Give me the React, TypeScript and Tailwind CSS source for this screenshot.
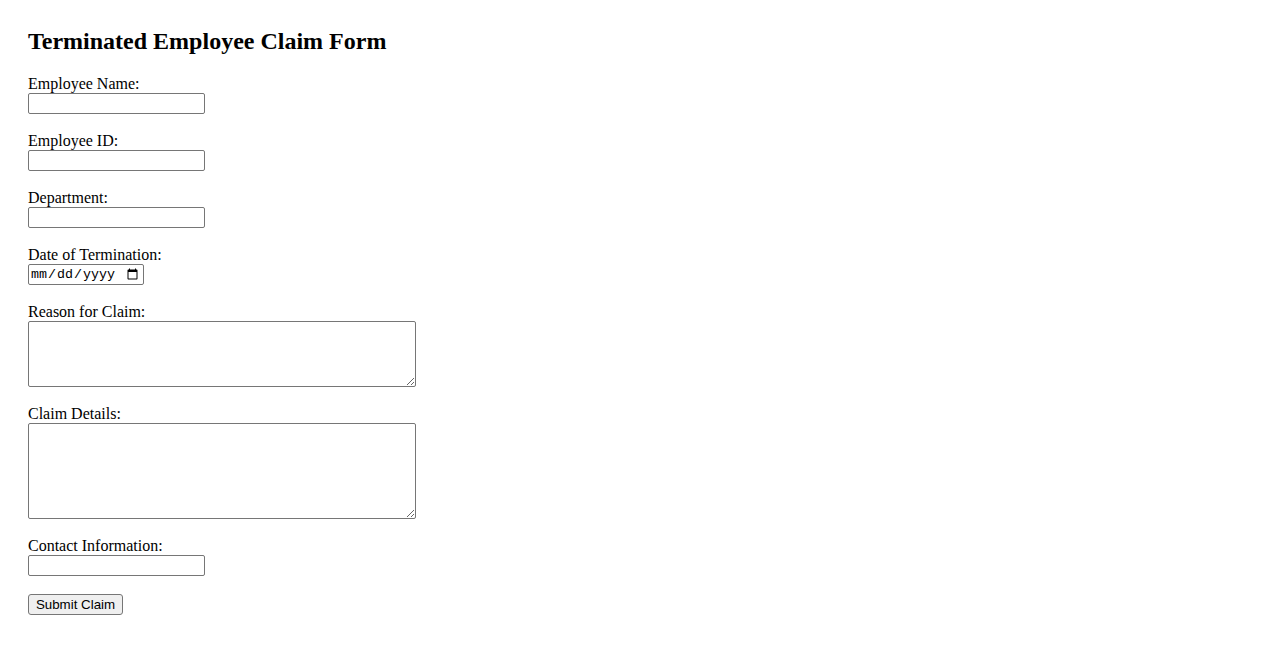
import { useState } from "react";

type Field = { label: string; kind: "text" | "date" | "area"; rows?: number };

const fields: Field[] = [
  { label: "Employee Name:", kind: "text" },
  { label: "Employee ID:", kind: "text" },
  { label: "Department:", kind: "text" },
  { label: "Date of Termination:", kind: "date" },
  { label: "Reason for Claim:", kind: "area", rows: 4 },
  { label: "Claim Details:", kind: "area", rows: 6 },
  { label: "Contact Information:", kind: "text" },
];

export default function App() {
  const [values, setValues] = useState<Record<string, string>>({});

  function update(key: string, v: string) {
    setValues((prev) => ({ ...prev, [key]: v }));
  }

  return (
    <main className="min-h-[650px] bg-white px-[28px] pt-[27px] text-black font-['Liberation_Serif',serif]">
      <h2 className="text-[24px] leading-[28px] font-bold mb-[20px]">
        Terminated Employee Claim Form
      </h2>

      <form onSubmit={(e) => e.preventDefault()}>
        {fields.map((f) => (
          <div key={f.label} className="mb-[18px]">
            <label className="block text-[16px] leading-[18px]">{f.label}</label>
            {f.kind === "text" && (
              <input
                type="text"
                value={values[f.label] ?? ""}
                onChange={(e) => update(f.label, e.target.value)}
                className="block w-[177px] h-[21px] border border-[#767676] rounded-[2px] px-[2px] text-[13.33px] font-['Liberation_Sans',sans-serif]"
              />
            )}
            {f.kind === "date" && (
              <input
                type="date"
                value={values[f.label] ?? ""}
                onChange={(e) => update(f.label, e.target.value)}
                className="block w-[116px] h-[21px] border border-[#767676] rounded-[2px] pl-[1px] pr-[2px] text-[13.33px] font-['Liberation_Mono',monospace]"
              />
            )}
            {f.kind === "area" && (
              <textarea
                value={values[f.label] ?? ""}
                onChange={(e) => update(f.label, e.target.value)}
                className={
                  "block w-[388px] border border-[#767676] rounded-[2px] p-[2px] text-[13.33px] font-['Liberation_Mono',monospace] " +
                  (f.rows === 6 ? "h-[96px]" : "h-[66px]")
                }
              />
            )}
          </div>
        ))}

        <button
          type="submit"
          className="block w-[95px] h-[21px] border border-[#767676] rounded-[3px] bg-[#efefef] text-[13.33px] leading-[19px] font-['Liberation_Sans',sans-serif]"
        >
          Submit Claim
        </button>
      </form>
    </main>
  );
}
